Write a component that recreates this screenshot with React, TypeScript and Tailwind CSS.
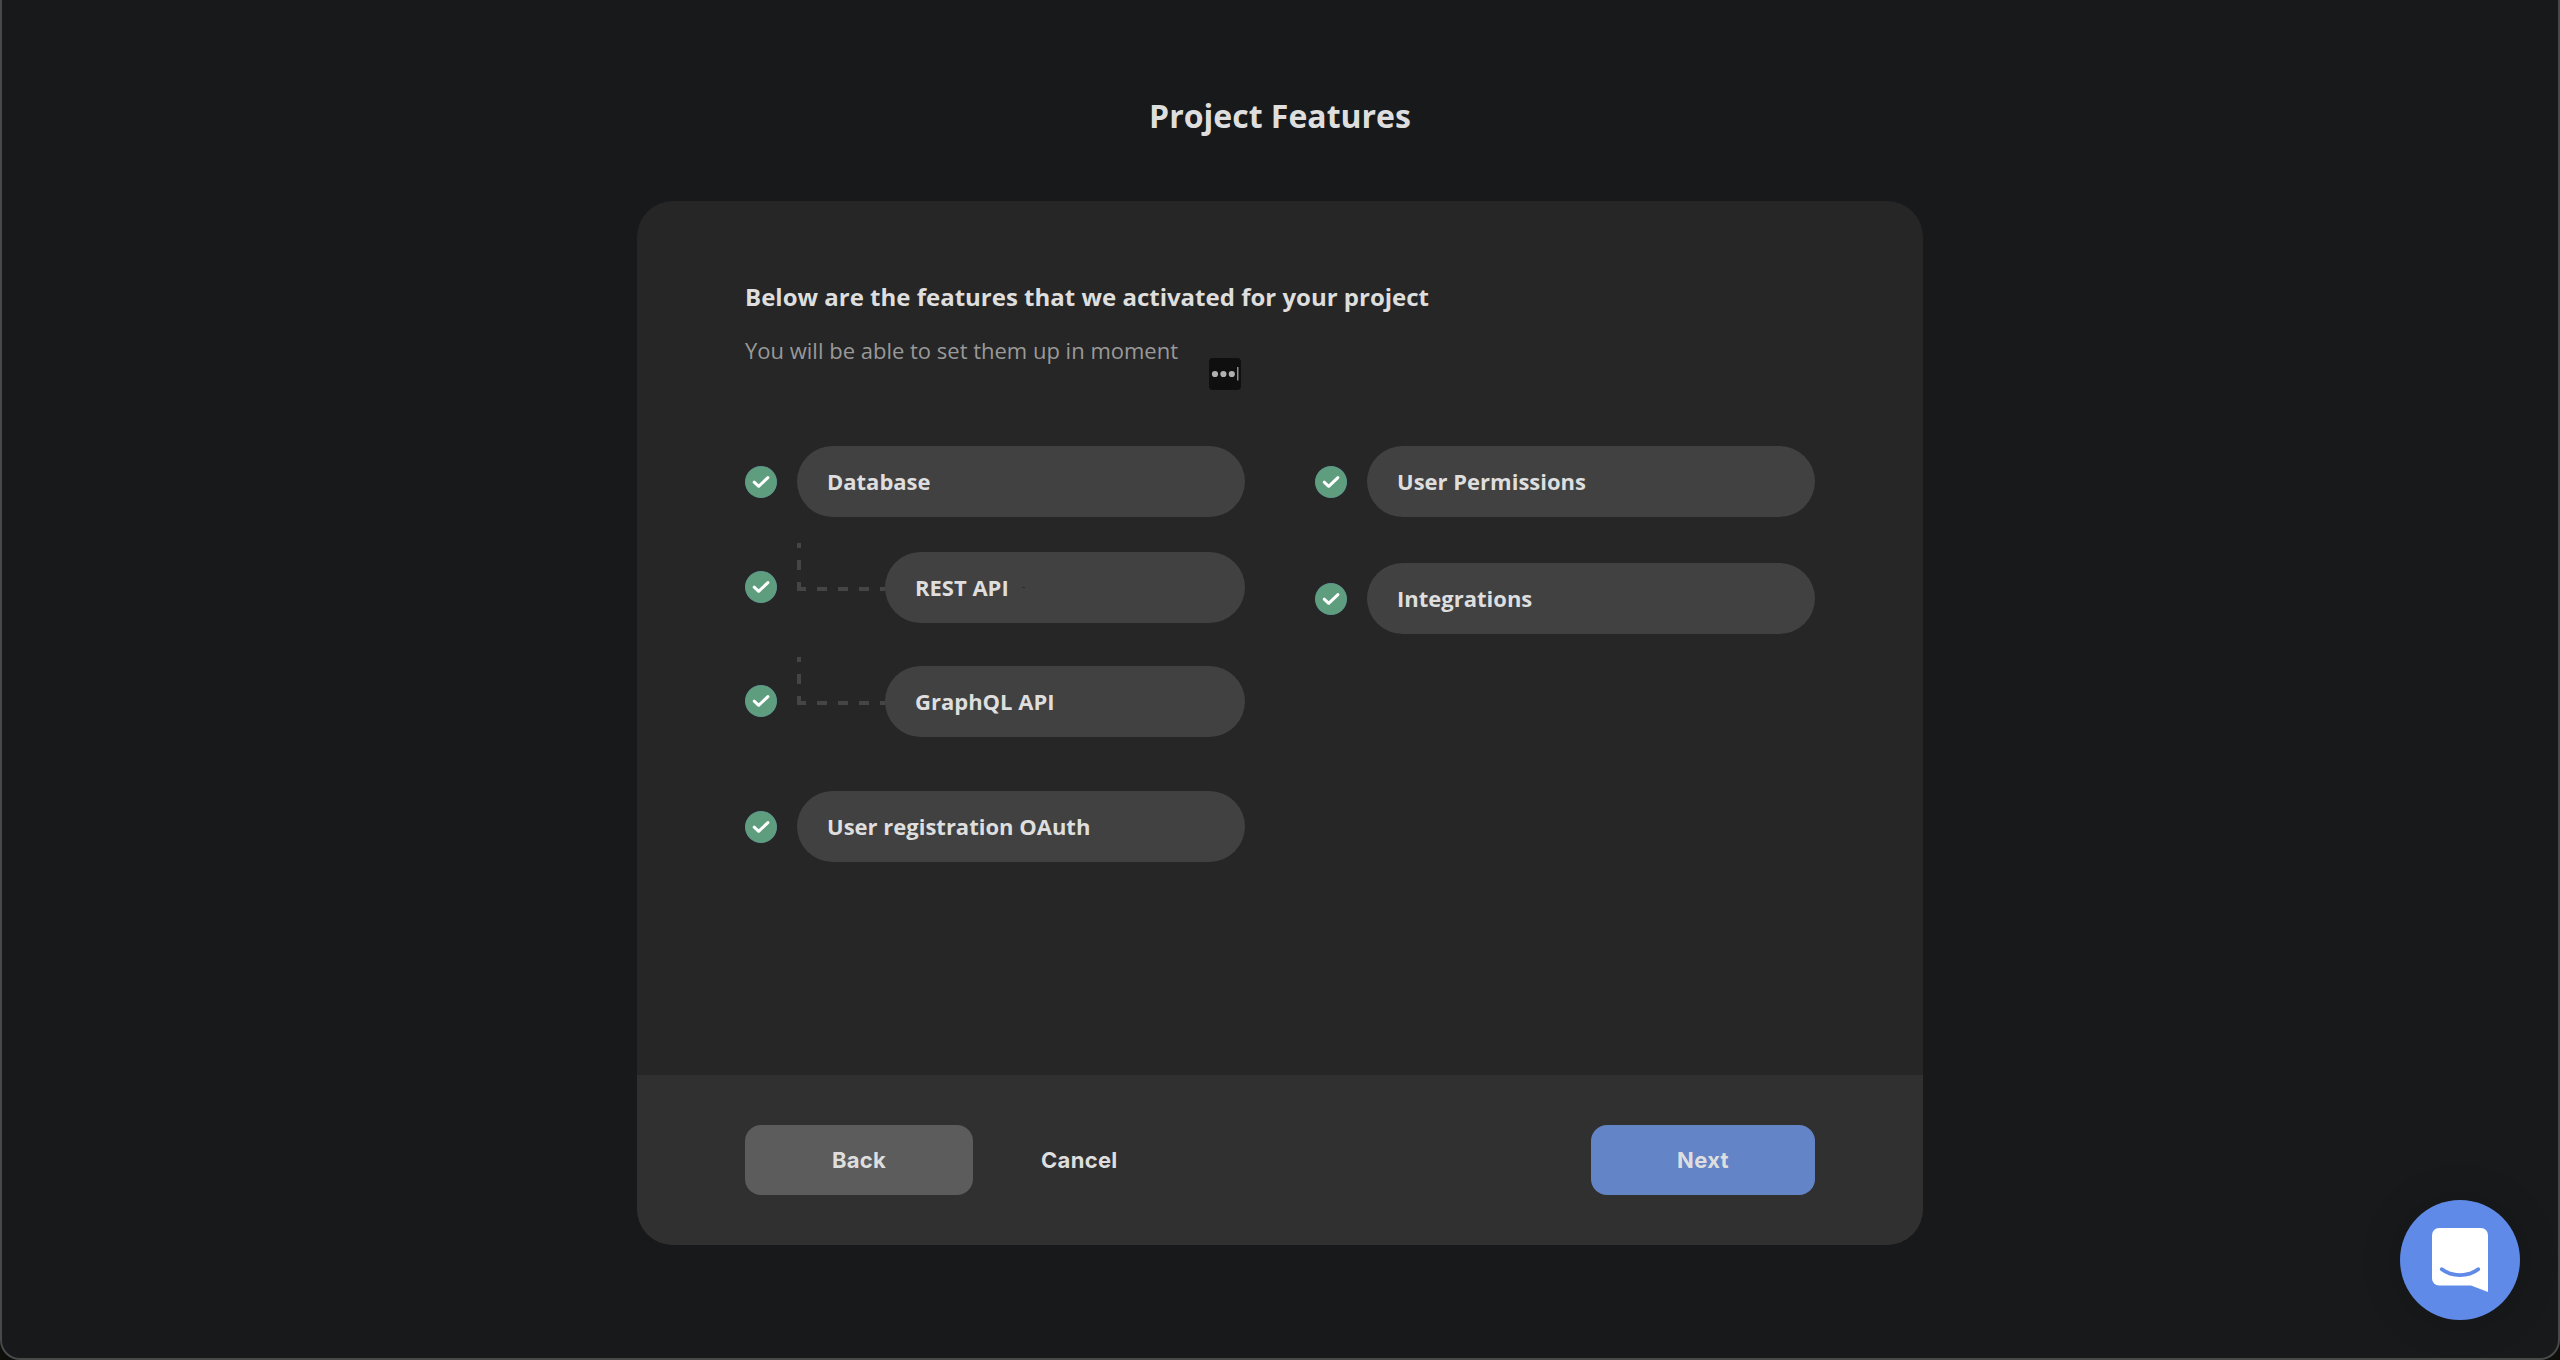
import type { ReactNode } from 'react';

function CheckBadge() {
  return (
    <svg className="size-8 shrink-0" viewBox="0 0 32 32" fill="none">
      <circle cx="16" cy="16" r="16" fill="#5f8f9c" />
      <circle cx="16" cy="16" r="15.6" fill="#5e9d7e" />
      <path d="M9.2 16.2 13.7 20.3 22.9 11.6" stroke="#fff" strokeWidth="3" strokeLinecap="round" strokeLinejoin="round" />
    </svg>
  );
}

function Connector() {
  return (
    <svg className="h-[50px] w-[88px] shrink-0 self-start" viewBox="0 0 88 50" fill="#454545">
      <path d="M0 2h4v5H0zM0 19h4v10H0zM0 41h4v5h5v4H0zM20 46h10v4H20zM41 46h10v4H41zM62 46h10v4H62zM83 46h5v4h-5z" />
    </svg>
  );
}

function Pill({ children }: { children: ReactNode }) {
  return (
    <div className="flex h-[71px] flex-1 items-center rounded-full bg-[#414141] pl-[30px] text-[22px] font-bold text-[#dedede]">
      {children}
    </div>
  );
}

function Feature({ label }: { label: string }) {
  return (
    <div className="flex h-[71px] items-center gap-5">
      <CheckBadge />
      <Pill>{label}</Pill>
    </div>
  );
}

function SubFeature({ label }: { label: ReactNode }) {
  return (
    <div className="flex h-[82px] gap-5">
      <div className="pt-[30px]">
        <CheckBadge />
      </div>
      <div className="flex flex-1 items-end">
        <Connector />
        <Pill>{label}</Pill>
      </div>
    </div>
  );
}

function TypingBadge() {
  return (
    <svg className="absolute top-[157px] left-[572px] size-8" viewBox="0 0 32 32">
      <rect width="32" height="32" rx="4" fill="#0f0f0f" />
      <g fill="#b0b0b0">
        <circle cx="6" cy="16" r="3.1" />
        <circle cx="14.4" cy="16" r="3.1" />
        <circle cx="22.8" cy="16" r="3.1" />
        <rect x="28" y="9" width="1.5" height="13.5" fill="#8c8c8c" />
      </g>
    </svg>
  );
}

function ChatLauncher() {
  return (
    <button className="absolute right-[38px] bottom-[38px] flex size-[120px] items-start justify-center rounded-full bg-[#5f8ae8] pt-7 shadow-[0_2px_40px_rgba(0,0,0,0.18)]">
      <svg className="h-16 w-14" viewBox="0 0 56 64" fill="none">
        <path d="M7 0H49A7 7 0 0 1 56 7V64L39 57.5H7A7 7 0 0 1 0 50.5V7A7 7 0 0 1 7 0Z" fill="#fff" />
        <path d="M9.8 41.2C20 49 36 49 46.2 41.2" stroke="#5f8ae8" strokeWidth="3.8" strokeLinecap="round" />
      </svg>
    </button>
  );
}

export default function App() {
  return (
    <div className="h-[1360px] w-[2560px] overflow-hidden bg-[#0e0e0b] font-['Open_Sans','Noto_Sans',sans-serif]">
      <div className="relative flex h-full flex-col items-center rounded-b-[20px] border-x-2 border-b-2 border-[#484949] bg-[#18191b] pt-[94px]">
        <h1 className="text-[32px] leading-[44px] font-bold text-[#dedede]">Project Features</h1>

        <main className="relative mt-[63px] flex h-[1044px] w-[1286px] flex-col overflow-hidden rounded-[36px] bg-[#262626]">
          <section className="flex-1 px-[108px] pt-20">
            <h2 className="text-2xl leading-8 font-bold text-[#dedede]">
              Below are the features that we activated for your project
            </h2>
            <p className="mt-[22px] text-[22px] leading-[30px] text-[#999999]">
              You will be able to set them up in moment
            </p>
            <TypingBadge />

            <div className="mt-[81px] flex gap-[70px]">
              <div className="flex w-[500px] flex-col">
                <Feature label="Database" />
                <div className="mt-6">
                  <SubFeature
                    label={
                      <>
                        REST API
                        <span className="ml-[13px] h-px w-[3px] bg-[#2a2a2a]" />
                      </>
                    }
                  />
                </div>
                <div className="mt-8">
                  <SubFeature label="GraphQL API" />
                </div>
                <div className="mt-[54px]">
                  <Feature label="User registration OAuth" />
                </div>
              </div>
              <div className="flex w-[500px] flex-col gap-[46px]">
                <Feature label="User Permissions" />
                <Feature label="Integrations" />
              </div>
            </div>
          </section>

          <footer className="flex h-[170px] items-center bg-[#303030] px-[108px] font-['Inter',sans-serif] text-[22px] font-bold tracking-[0.3px] text-[#dedede]">
            <button className="h-[70px] w-[228px] rounded-2xl bg-[#5c5c5c]">Back</button>
            <button className="ml-[68px]">Cancel</button>
            <button className="ml-auto h-[70px] w-56 rounded-2xl bg-[#6384c6]">Next</button>
          </footer>
        </main>

        <ChatLauncher />
      </div>
    </div>
  );
}
